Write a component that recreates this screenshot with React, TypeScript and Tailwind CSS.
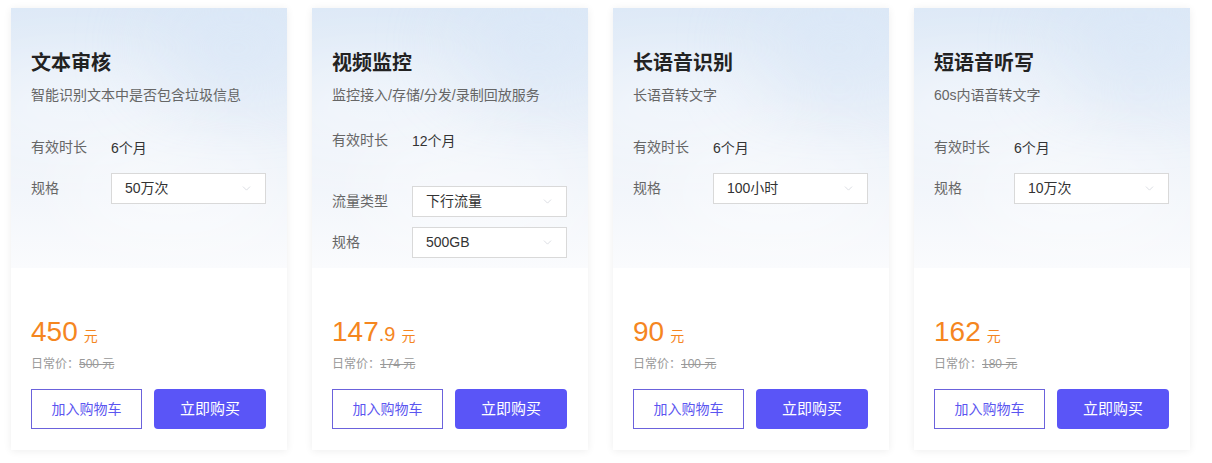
import { ChevronDown } from 'lucide-react'

type Spec = { label: string; value: string; select?: boolean; mt: string }

type Product = {
  title: string
  desc: string
  specsMt: string
  specs: Spec[]
  price: string
  decimal?: string
  origin: string
}

const products: Product[] = [
  {
    title: '文本审核',
    desc: '智能识别文本中是否包含垃圾信息',
    specsMt: 'mt-[32px]',
    specs: [
      { label: '有效时长', value: '6个月', mt: 'mt-0' },
      { label: '规格', value: '50万次', select: true, mt: 'mt-[15px]' },
    ],
    price: '450',
    origin: '500 元',
  },
  {
    title: '视频监控',
    desc: '监控接入/存储/分发/录制回放服务',
    specsMt: 'mt-[25px]',
    specs: [
      { label: '有效时长', value: '12个月', mt: 'mt-0' },
      { label: '流量类型', value: '下行流量', select: true, mt: 'mt-[35px]' },
      { label: '规格', value: '500GB', select: true, mt: 'mt-[10px]' },
    ],
    price: '147',
    decimal: '.9',
    origin: '174 元',
  },
  {
    title: '长语音识别',
    desc: '长语音转文字',
    specsMt: 'mt-[32px]',
    specs: [
      { label: '有效时长', value: '6个月', mt: 'mt-0' },
      { label: '规格', value: '100小时', select: true, mt: 'mt-[15px]' },
    ],
    price: '90',
    origin: '100 元',
  },
  {
    title: '短语音听写',
    desc: '60s内语音转文字',
    specsMt: 'mt-[32px]',
    specs: [
      { label: '有效时长', value: '6个月', mt: 'mt-0' },
      { label: '规格', value: '10万次', select: true, mt: 'mt-[15px]' },
    ],
    price: '162',
    origin: '180 元',
  },
]

const SpecRow = ({ spec }: { spec: Spec }) => (
  <div className={`flex items-center ${spec.mt}`}>
    <span className="w-[80px] shrink-0 text-[14px] text-[#666]">{spec.label}</span>
    {spec.select ? (
      <div className="flex h-[31px] w-[155px] items-center justify-between border border-[#d9d9d9] bg-white pl-[13px] pr-[12px]">
        <span className="text-[14px] text-[#333]">{spec.value}</span>
        <ChevronDown className="h-[13px] w-[13px] text-[#c8ccd4]" strokeWidth={1.2} />
      </div>
    ) : (
      <span className="h-5 leading-5 text-[14px] text-[#333]">{spec.value}</span>
    )}
  </div>
)

const ProductCard = ({ product }: { product: Product }) => (
  <div className="flex h-[442px] w-[276px] shrink-0 flex-col overflow-hidden bg-white shadow-[0_1px_8px_rgba(0,0,0,0.07)]">
    {/* Top area with cloudy background */}
    <div className="relative h-[260px] shrink-0 overflow-hidden bg-gradient-to-b from-[#dde9f7] via-[#eef3fa] via-55% to-[#fafbfd] px-5 pt-[41px]">
      <div className="pointer-events-none absolute -left-10 top-[60px] h-[80px] w-[220px] rounded-full bg-white/50 blur-2xl" />
      <div className="pointer-events-none absolute right-[-30px] top-[10px] h-[60px] w-[160px] rounded-full bg-[#d6e5f7]/60 blur-2xl" />
      <div className="pointer-events-none absolute left-[60px] top-[150px] h-[70px] w-[200px] rounded-full bg-white/60 blur-2xl" />
      <div className="relative">
        <h2 className="h-7 text-[20px] font-bold leading-7 text-[#222]">{product.title}</h2>
        <p className="mt-2 h-5 text-[14px] leading-5 text-[#666]">{product.desc}</p>
        <div className={product.specsMt}>
          {product.specs.map(spec => (
            <SpecRow key={spec.label} spec={spec} />
          ))}
        </div>
      </div>
    </div>

    {/* Price and actions */}
    <div className="flex flex-1 flex-col justify-end px-5 pb-[21px]">
      <div className="flex h-9 items-baseline text-[#f5861f]">
        <span className="text-[28px] font-medium">{product.price}</span>
        {product.decimal && <span className="text-[20px] font-medium">{product.decimal}</span>}
        <span className="ml-1.5 text-[14px]">元</span>
      </div>
      <div className="mt-[8px] h-[18px] text-[12px] leading-[18px] text-[#999]">
        日常价：<span className="line-through">{product.origin}</span>
      </div>
      <div className="mt-4 flex gap-3">
        <button className="h-10 w-[111px] border border-[#6b62dc] bg-white text-[14px] text-[#5b55f0]">
          加入购物车
        </button>
        <button className="h-10 w-[112px] rounded-sm bg-[#5a55f7] text-[15px] text-white">
          立即购买
        </button>
      </div>
    </div>
  </div>
)

export default function App() {
  return (
    <div
      className="flex h-[463px] w-[1212px] gap-[25px] bg-white pl-[11px] pt-2"
      style={{ fontFamily: '"Liberation Sans", "Noto Sans CJK SC", sans-serif' }}
    >
      {products.map(p => (
        <ProductCard key={p.title} product={p} />
      ))}
    </div>
  )
}
